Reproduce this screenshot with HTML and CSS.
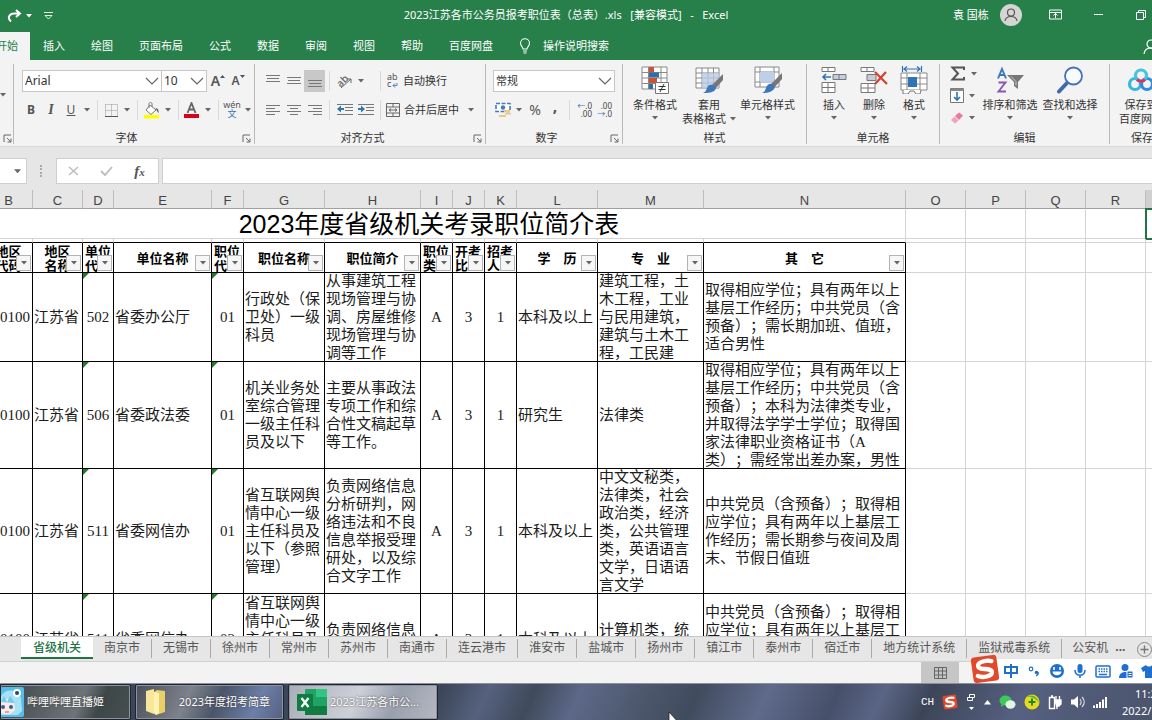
FILE: index.html
```html
<!DOCTYPE html>
<html lang="zh-CN">
<head>
<meta charset="utf-8">
<title>2023江苏各市公务员报考职位表（总表）.xls - Excel</title>
<link rel="stylesheet" href="styles.css">
</head>
<body>
<svg class="defs" aria-hidden="true">
  <symbol id="dn" viewBox="0 0 6 4"><path d="M0 0h6L3 3.5z" fill="currentColor"/></symbol>
  <symbol id="chev" viewBox="0 0 14 9"><path d="M1 1l6 6 6-6" fill="none" stroke="#666" stroke-width="1.2"/></symbol>
  <symbol id="launch" viewBox="0 0 9 9"><path d="M1 8V1h7M4 4l4 4M8 4.500V8H4.500" fill="none" stroke="#666"/></symbol>
  <symbol id="sogou" viewBox="0 0 28 28"><g transform="rotate(-8 14 14)"><rect x="2" y="2" width="24" height="24" rx="3" fill="#e2492b"/><path d="M21 7.500C17 6 8 6 8 10.500s12 2.500 12 7S10 22 6.500 19.500" fill="none" stroke="#fff" stroke-width="4" stroke-linecap="round"/></g></symbol>
</svg>

<header class="titlebar">
  <div class="quick">
    <button class="qa" aria-label="恢复"><svg width="16" height="14" viewBox="0 0 16 14"><path d="M4 12.500C-.5 8.500 3 4.500 7 4.500h5M9 1l4 3.500L9 8" fill="none" stroke="#fff" stroke-width="2"/></svg><svg class="dn"><use href="#dn"/></svg></button>
    <button class="qa" aria-label="自定义快速访问工具栏"><svg width="9" height="8" viewBox="0 0 9 8"><path d="M0 .5h9M1 3.500h7L4.500 7z" fill="none" stroke="#dff0e5"/></svg></button>
  </div>
  <h1 class="doc">2023江苏各市公务员报考职位表（总表）.xls&nbsp;&nbsp; [兼容模式]&nbsp;&nbsp; -&nbsp;&nbsp; Excel</h1>
  <div class="account">
    <span>袁 国栋</span>
    <svg class="avatar" viewBox="0 0 22 22"><circle cx="11" cy="11" r="11" fill="#d5d5d3"/><circle cx="11" cy="8.500" r="3.500" fill="none" stroke="#555" stroke-width="1.200"/><path d="M5 17c1-6 11-6 12 0" fill="none" stroke="#555" stroke-width="1.200"/></svg>
    <button class="win" aria-label="功能区显示选项"><svg width="13" height="11" viewBox="0 0 13 11"><path d="M.5 1h12v9H.5zM.5 3.500h12M6.500 9V4.500M4.500 6.500l2-2 2 2" fill="none" stroke="#fff"/></svg></button>
    <button class="win" aria-label="最小化"><svg width="9" height="9" viewBox="0 0 9 9"><path d="M0 4.500h9" stroke="#fff"/></svg></button>
    <button class="win" aria-label="还原"><svg width="10" height="10" viewBox="0 0 10 10"><path d="M.5 2.500h7v7h-7zM2.500 2.500v-2h7v7h-2" fill="none" stroke="#fff"/></svg></button>
  </div>
</header>

<nav class="menu">
  <button class="on">开始</button><button>插入</button><button>绘图</button><button>页面布局</button><button>公式</button><button>数据</button><button>审阅</button><button>视图</button><button>帮助</button><button>百度网盘</button>
  <button class="tell"><svg width="12" height="16" viewBox="0 0 12 16"><path d="M4 11C4 9 1.500 8 1.500 5.200a4.500 4.500 0 0 1 9 0C10.500 8 8 9 8 11zM4 13h4M4.500 15h3" fill="none" stroke="#fff" stroke-width="1.100"/></svg>操作说明搜索</button>
  <button class="share" aria-label="共享"><svg width="14" height="16" viewBox="0 0 14 16"><circle cx="8" cy="5" r="4" fill="none" stroke="#fff" stroke-width="1.200"/><path d="M1 15c1-7 8-7 10-4" fill="none" stroke="#fff" stroke-width="1.200"/></svg></button>
</nav>

<section class="ribbon" aria-label="功能区">
  <div class="group clip">
    <div class="body"><button class="arr edge" aria-label="粘贴选项"><svg class="dn"><use href="#dn"/></svg></button></div>
    <div class="cap"><span></span><button class="la" aria-label="剪贴板"><svg><use href="#launch"/></svg></button></div>
  </div>

  <div class="group font">
    <div class="body">
      <div class="line boxes">
        <label class="pick family"><select aria-label="字体"><option>Arial</option></select><svg><use href="#chev"/></svg></label>
        <label class="pick size"><select aria-label="字号"><option>10</option></select><svg><use href="#chev"/></svg></label>
        <button class="b grow" aria-label="增大字号"><b class="big">A</b><svg width="5" height="3"><path d="M0 3h5L2.500 0z" fill="#44546a"/></svg></button>
        <button class="b grow" aria-label="减小字号"><b>A</b><svg width="5" height="3"><path d="M0 0h5L2.500 3z" fill="#44546a"/></svg></button>
      </div>
      <div class="line">
        <button class="b"><b>B</b></button><button class="b it"><i>I</i></button><button class="b"><u>U</u></button><button class="arr" aria-label="下划线"><svg class="dn"><use href="#dn"/></svg></button><i class="sep"></i>
        <button class="b" aria-label="边框"><svg width="13" height="13" viewBox="0 0 13 13"><path d="M.5.5h12v12M.5.5v12M6.500.5v12M.5 6.500h12" fill="none" stroke="#999" stroke-dasharray="1 1"/><path d="M0 12.500h13" stroke="#555"/></svg></button><button class="arr" aria-label="边框选项"><svg class="dn"><use href="#dn"/></svg></button><i class="sep"></i>
        <button class="b" aria-label="填充颜色"><svg width="16" height="17" viewBox="0 0 16 17"><path d="M6 3l6 5-5 4.500L2 8zM5 6V2c0-2 3-2 3 0v3" fill="#fff" stroke="#777"/><path d="M12 6c3 1 2.500 3 2.500 5-2-1-1-3-3-4z" fill="#666"/><path d="M0 13h15v3.500H0z" fill="#ff0"/></svg></button><button class="arr" aria-label="填充选项"><svg class="dn"><use href="#dn"/></svg></button><i class="sep"></i>
        <button class="b" aria-label="字体颜色"><svg width="15" height="16" viewBox="0 0 15 16"><path d="M3.500 11L7.500 1l4 10M5 7.500h5" fill="none" stroke="#666" stroke-width="1.800"/><path d="M0 12h15v4H0z" fill="#d9001b"/></svg></button><button class="arr" aria-label="颜色选项"><svg class="dn"><use href="#dn"/></svg></button><i class="sep"></i>
        <button class="b wen"><span>wén</span><em>文</em></button><button class="arr" aria-label="拼音选项"><svg class="dn"><use href="#dn"/></svg></button>
      </div>
    </div>
    <div class="cap"><span>字体</span><button class="la" aria-label="字体设置"><svg><use href="#launch"/></svg></button></div>
  </div>

  <div class="group align">
    <div class="body">
      <div class="line">
        <button class="b" aria-label="顶端对齐"><svg width="14" height="14" viewBox="0 0 14 14"><path d="M0 1.500h14M1 4.500h12M0 7.500h14" stroke="#777"/></svg></button>
        <button class="b" aria-label="垂直居中"><svg width="14" height="14" viewBox="0 0 14 14"><path d="M0 3.500h14M1 6.500h12M0 9.500h14" stroke="#777"/></svg></button>
        <button class="b sel" aria-label="底端对齐"><svg width="14" height="14" viewBox="0 0 14 14"><path d="M0 6.500h14M1 9.500h12M0 12.500h14" stroke="#777"/></svg></button><i class="sep"></i>
        <div class="duo"><button class="b" aria-label="方向"><svg width="16" height="15" viewBox="0 0 16 15"><text x="0" y="11" font-size="10" font-family="Open Sans" font-weight="600" fill="#666" transform="rotate(-45 5 8)">ab</text><path d="M4 14L14 5M10 5h4v4" fill="none" stroke="#666"/></svg></button><button class="arr" aria-label="方向选项"><svg class="dn"><use href="#dn"/></svg></button></div><i class="sep"></i>
        <button class="txt"><svg width="13" height="16" viewBox="0 0 13 16"><text x="1" y="7" font-size="9" font-family="Open Sans" fill="#444">ab</text><text x="1" y="14" font-size="9" font-family="Open Sans" fill="#444">c</text><path d="M7 12.500h4V10M9 10.500l-2 2 2 2" fill="none" stroke="#4a86c5"/></svg>自动换行</button>
      </div>
      <div class="line">
        <button class="b" aria-label="左对齐"><svg width="14" height="11" viewBox="0 0 14 11"><path d="M0 .5h14M0 3.500h9M0 6.500h14M0 9.500h9" stroke="#777"/></svg></button>
        <button class="b" aria-label="居中"><svg width="14" height="11" viewBox="0 0 14 11"><path d="M0 .5h14M3 3.500h8M0 6.500h14M3 9.500h8" stroke="#777"/></svg></button>
        <button class="b" aria-label="右对齐"><svg width="14" height="11" viewBox="0 0 14 11"><path d="M0 .5h14M5 3.500h9M0 6.500h14M5 9.500h9" stroke="#777"/></svg></button><i class="sep"></i>
        <div class="duo"><button class="b" aria-label="减少缩进"><svg width="16" height="12" viewBox="0 0 16 12"><path d="M0 .5h16M8 3.500h8M8 6.500h8M0 10.500h16" stroke="#777"/><path d="M0 5l4-3.500v2.500h3v2H4v2.500z" fill="#2f75b5"/></svg></button><button class="b" aria-label="增加缩进"><svg width="16" height="12" viewBox="0 0 16 12"><path d="M0 .5h16M8 3.500h8M8 6.500h8M0 10.500h16" stroke="#777"/><path d="M7 5L3 1.500v2.500H0v2h3v2.500z" fill="#2f75b5"/></svg></button></div><i class="sep"></i>
        <button class="txt"><svg width="14" height="14" viewBox="0 0 14 14"><path d="M.5.5h13v13H.5zM.5 4h13M.5 10h13M7 .5V4M7 10v3.500M3 7h8M5 5.500L3 7l2 1.500M9 5.500L11 7 9 8.500" fill="none" stroke="#666"/></svg>合并后居中</button><button class="arr mrg" aria-label="合并选项"><svg class="dn"><use href="#dn"/></svg></button>
      </div>
    </div>
    <div class="cap"><span>对齐方式</span><button class="la" aria-label="对齐设置"><svg><use href="#launch"/></svg></button></div>
  </div>

  <div class="group num">
    <div class="body">
      <div class="line"><label class="pick fmt"><select aria-label="数字格式"><option>常规</option></select><svg><use href="#chev"/></svg></label></div>
      <div class="line">
        <button class="b" aria-label="会计数字格式"><svg width="17" height="16" viewBox="0 0 17 16"><rect x="1" y="1.500" width="14" height="8" fill="#fff" stroke="#4a7ab5" stroke-width="1.600" stroke-dasharray="4 1.500"/><circle cx="8" cy="5.500" r="2.200" fill="#4a7ab5"/><path d="M9 8h6v2H9zM10 11h6v1.500h-6zM4 13h7v2H4z" fill="#ecc97c"/></svg></button><button class="arr" aria-label="货币选项"><svg class="dn"><use href="#dn"/></svg></button>
        <button class="b pct">%</button><button class="b comma">,</button><i class="sep"></i>
        <button class="b dec" aria-label="增加小数位数"><span><em>←</em>.0</span><span>.00</span></button><button class="b dec" aria-label="减少小数位数"><span>.00</span><span><em>→</em>.0</span></button>
      </div>
    </div>
    <div class="cap"><span>数字</span><button class="la" aria-label="数字设置"><svg><use href="#launch"/></svg></button></div>
  </div>

  <div class="group styles">
    <div class="body row">
      <button class="lg"><svg width="28" height="28" viewBox="0 0 28 28"><path d="M1 1h25v22H1zM1 6.500h25M1 12h25M1 17.500h25M7.500 1v22M20 1v22" fill="#fff" stroke="#888"/><path d="M8 1h5v5H8zM8 12h8v5H8z" fill="#d0502f"/><path d="M8 6.500h10v5H8zM8 18h4v5H8z" fill="#2f6fa8"/><path d="M14.500 16.500h13v11h-13z" fill="#fff" stroke="#777"/><path d="M17.500 20.500h7M17.500 23.500h7M23 18l-4 8" stroke="#333"/></svg><span>条件格式</span><svg class="dn"><use href="#dn"/></svg></button>
      <button class="lg two"><svg width="28" height="28" viewBox="0 0 28 28"><path d="M1 2h23v20H1zM1 7h23M1 12h23M1 17h23M7 2v20M13 2v20M18.500 2v20" fill="#fff" stroke="#888"/><path d="M7 7h17v15H7z" fill="#b9cbe6" opacity=".8"/><path d="M28 8v6l-8 9-4-3z" fill="#777"/><path d="M18 19c3 1 4 4 1 6-3 2-8 2-11 2 3-1 3-3 4-5 1-3 3-4 6-3z" fill="#3e78b8"/></svg><span>套用</span><span>表格格式<svg class="dn"><use href="#dn"/></svg></span></button>
      <button class="lg"><svg width="28" height="28" viewBox="0 0 28 28"><path d="M1 1h24v20H1zM1 6h24M1 16h24M6 1v20M20 1v20" fill="#fff" stroke="#888"/><path d="M6 6h14v10H6z" fill="#bcd0ec"/><path d="M28 7v6l-8 9-4-3z" fill="#777"/><path d="M18 18c3 1 4 4 1 6-3 3-8 3-11 3 3-1 3-3 4-5 1-3 3-5 6-4z" fill="#3e78b8"/></svg><span>单元格样式</span><svg class="dn"><use href="#dn"/></svg></button>
    </div>
    <div class="cap"><span>样式</span></div>
  </div>

  <div class="group cellsg">
    <div class="body row">
      <button class="lg"><svg width="28" height="28" viewBox="0 0 28 28"><path d="M2 1.500h13v4H2zM8 1.500v4M2 16.500h13v10H2zM2 21.500h13M8 16.500v10" fill="#fff" stroke="#777"/><path d="M13 8.500h13v5H13zM19 8.500v5" fill="#c2cfe3" stroke="#777"/><path d="M3 11h8M6 8l-3 3 3 3" fill="none" stroke="#2f75b5" stroke-width="1.600"/></svg><span>插入</span><svg class="dn"><use href="#dn"/></svg></button>
      <button class="lg"><svg width="28" height="28" viewBox="0 0 28 28"><path d="M1 1.500h13v4H1zM7 1.500v4M1 17.500h14v9H1zM1 22h14M8 17.500v9" fill="#fff" stroke="#777"/><path d="M7 8.500h9v6H7z" fill="#c8ccd2" stroke="#777"/><path d="M15 6l12 12M26 6L15 18" stroke="#d2412c" stroke-width="2.200"/></svg><span>删除</span><svg class="dn"><use href="#dn"/></svg></button>
      <button class="lg"><svg width="28" height="28" viewBox="0 0 28 28"><path d="M1 7h26v17H1zM1 12h26M1 18h26M7 7v17M20 7v17" fill="#fff" stroke="#888"/><path d="M3 24v4h5l2-3h4l2 3h4l1-4" fill="#fff" stroke="#777"/><path d="M8 11h9v10H8z" fill="#2f75b5"/><path d="M2.500 0v6M21.500 0v6M4 3h16M7 .5L4 3l3 2.500M17 .5L20 3l-3 2.500" fill="none" stroke="#2f75b5" stroke-width="1.200"/></svg><span>格式</span><svg class="dn"><use href="#dn"/></svg></button>
    </div>
    <div class="cap"><span>单元格</span></div>
  </div>

  <div class="group edit">
    <div class="body row">
      <div class="stack">
        <button aria-label="自动求和"><svg width="16" height="15" viewBox="0 0 16 15"><path d="M14 4V1.500H2.500L8 7.500l-5.500 6H14V11" fill="none" stroke="#555" stroke-width="2"/></svg><svg class="dn"><use href="#dn"/></svg></button>
        <button aria-label="填充"><svg width="14" height="15" viewBox="0 0 14 15"><path d="M.5.5h13v14H.5z" fill="#fff" stroke="#777"/><path d="M.5.5h13V3H.5z" fill="#888"/><path d="M7 4v8M4 9l3 3 3-3" fill="none" stroke="#2f75b5" stroke-width="1.600"/></svg><svg class="dn"><use href="#dn"/></svg></button>
        <button aria-label="清除"><svg width="14" height="12" viewBox="0 0 14 12"><path d="M5 4l4-3.500 4 3L9 8z" fill="#e8799c"/><path d="M4.500 4.500l4 4L5 11.500 1 8z" fill="#f0a3bb"/></svg><svg class="dn"><use href="#dn"/></svg></button>
      </div>
      <button class="lg"><svg width="28" height="28" viewBox="0 0 28 28"><path d="M2 12.500L6 3l4 9.500M3.500 9h5" fill="none" stroke="#3b78b9" stroke-width="1.900"/><path d="M2.500 16.500h7l-7 9h7.500" fill="none" stroke="#8c55b0" stroke-width="1.900"/><path d="M11 9h17l-6 7v7l-4-3v-4z" fill="#777"/><path d="M15 10.500l5 5v4" fill="none" stroke="#ccc"/></svg><span>排序和筛选</span><svg class="dn"><use href="#dn"/></svg></button>
      <button class="lg"><svg width="28" height="28" viewBox="0 0 28 28"><path d="M11 17L3 25.500" stroke="#4069a8" stroke-width="4" stroke-linecap="round"/><circle cx="17.500" cy="10" r="8.500" fill="#f7fbff" stroke="#4473b4" stroke-width="1.800"/></svg><span>查找和选择</span><svg class="dn"><use href="#dn"/></svg></button>
    </div>
    <div class="cap"><span>编辑</span></div>
  </div>

  <div class="group save">
    <div class="body row">
      <button class="lg"><svg width="28" height="28" viewBox="0 0 28 28"><circle cx="8" cy="18" r="5.500" fill="none" stroke="#35b8e0" stroke-width="3.200"/><circle cx="20" cy="18" r="5.500" fill="none" stroke="#2f8be0" stroke-width="3.200"/><circle cx="14" cy="9.500" r="5.500" fill="none" stroke="#46c3dd" stroke-width="3.200"/><path d="M10 13.500a5.500 5.500 0 0 0 8 0" fill="none" stroke="#e0335a" stroke-width="3.200"/></svg><span>保存到</span><span>百度网盘</span></button>
    </div>
    <div class="cap"><span>保存</span></div>
  </div>
</section>

<section class="formula">
  <div class="name"><input aria-label="名称框"><svg class="dn"><use href="#dn"/></svg></div>
  <i class="dots"></i>
  <div class="fx">
    <button aria-label="取消"><svg width="11" height="10" viewBox="0 0 11 10"><path d="M1 1l9 8M10 1L1 9" stroke="#bbb" stroke-width="1.400"/></svg></button>
    <button aria-label="输入"><svg width="13" height="10" viewBox="0 0 13 10"><path d="M1 5l4 4 7-8" fill="none" stroke="#bbb" stroke-width="1.800"/></svg></button>
    <button class="fn" aria-label="插入函数"><i>f<small>x</small></i></button>
  </div>
  <input class="bar" aria-label="编辑栏">
</section>

<main class="sheet">
<table>
  <colgroup><col class="w32"><col class="w48"><col class="w50"><col class="w31"><col class="w98"><col class="w32"><col class="w81"><col class="w96"><col class="w32"><col class="w32"><col class="w32"><col class="w81"><col class="w106"><col class="w202"><col class="w60"><col class="w60"><col class="w60"><col class="w60"><col class="w60"></colgroup>
  <thead>
    <tr class="letters"><th></th><th>B</th><th>C</th><th>D</th><th>E</th><th>F</th><th>G</th><th>H</th><th>I</th><th>J</th><th>K</th><th>L</th><th>M</th><th>N</th><th>O</th><th>P</th><th>Q</th><th>R</th><th class="cur"></th></tr>
  </thead>
  <tbody>
    <tr class="title"><td colspan="14">2023年度省级机关考录职位简介表</td><td></td><td></td><td></td><td></td><td class="active"></td></tr>
    <tr class="thin"><td></td><td></td><td></td><td></td><td></td><td></td><td></td><td></td><td></td><td></td><td></td><td></td><td></td><td></td><td></td><td></td><td></td><td></td><td></td></tr>
    <tr class="heads">
      <th></th>
      <th>地区<br>代码<button class="flt" aria-label="筛选"><svg class="dn"><use href="#dn"/></svg></button></th>
      <th>地区<br>名称<button class="flt" aria-label="筛选"><svg class="dn"><use href="#dn"/></svg></button></th>
      <th class="lf">单位<br>代<button class="flt" aria-label="筛选"><svg class="dn"><use href="#dn"/></svg></button></th>
      <th>单位名称<button class="flt" aria-label="筛选"><svg class="dn"><use href="#dn"/></svg></button></th>
      <th class="lf">职位<br>代<button class="flt" aria-label="筛选"><svg class="dn"><use href="#dn"/></svg></button></th>
      <th>职位名称<button class="flt" aria-label="筛选"><svg class="dn"><use href="#dn"/></svg></button></th>
      <th>职位简介<button class="flt" aria-label="筛选"><svg class="dn"><use href="#dn"/></svg></button></th>
      <th class="lf">职位<br>类<button class="flt" aria-label="筛选"><svg class="dn"><use href="#dn"/></svg></button></th>
      <th class="lf">开考<br>比<button class="flt" aria-label="筛选"><svg class="dn"><use href="#dn"/></svg></button></th>
      <th class="lf">招考<br>人<button class="flt" aria-label="筛选"><svg class="dn"><use href="#dn"/></svg></button></th>
      <th>学　历<button class="flt" aria-label="筛选"><svg class="dn"><use href="#dn"/></svg></button></th>
      <th>专　业<button class="flt" aria-label="筛选"><svg class="dn"><use href="#dn"/></svg></button></th>
      <th>其　它<button class="flt" aria-label="筛选"><svg class="dn"><use href="#dn"/></svg></button></th>
      <td></td><td></td><td></td><td></td><td></td>
    </tr>
    <tr class="r1">
      <td></td><td class="rt"><div>0100</div></td><td><div>江苏省</div></td><td class="ct err"><div>502</div></td><td><div>省委办公厅</div></td><td class="ct err"><div>01</div></td>
      <td><div>行政处（保<br>卫处）一级<br>科员</div></td>
      <td><div>从事建筑工程<br>现场管理与协<br>调、房屋维修<br>现场管理与协<br>调等工作</div></td>
      <td class="ct"><div>A</div></td><td class="ct"><div>3</div></td><td class="ct"><div>1</div></td><td><div>本科及以上</div></td>
      <td><div>建筑工程，土<br>木工程，工业<br>与民用建筑，<br>建筑与土木工<br>程，工民建</div></td>
      <td><div>取得相应学位；具有两年以上<br>基层工作经历；中共党员（含<br>预备）；需长期加班、值班，<br>适合男性</div></td>
      <td></td><td></td><td></td><td></td><td></td>
    </tr>
    <tr class="r2">
      <td></td><td class="rt"><div>0100</div></td><td><div>江苏省</div></td><td class="ct err"><div>506</div></td><td><div>省委政法委</div></td><td class="ct err"><div>01</div></td>
      <td><div>机关业务处<br>室综合管理<br>一级主任科<br>员及以下</div></td>
      <td><div>主要从事政法<br>专项工作和综<br>合性文稿起草<br>等工作。</div></td>
      <td class="ct"><div>A</div></td><td class="ct"><div>3</div></td><td class="ct"><div>1</div></td><td><div>研究生</div></td>
      <td><div>法律类</div></td>
      <td><div>取得相应学位；具有两年以上<br>基层工作经历；中共党员（含<br>预备）；本科为法律类专业，<br>并取得法学学士学位；取得国<br>家法律职业资格证书（A<br>类）；需经常出差办案，男性</div></td>
      <td></td><td></td><td></td><td></td><td></td>
    </tr>
    <tr class="r3">
      <td></td><td class="rt"><div>0100</div></td><td><div>江苏省</div></td><td class="ct err"><div>511</div></td><td><div>省委网信办</div></td><td class="ct err"><div>01</div></td>
      <td><div>省互联网舆<br>情中心一级<br>主任科员及<br>以下（参照<br>管理）</div></td>
      <td><div>负责网络信息<br>分析研判，网<br>络违法和不良<br>信息举报受理<br>研处，以及综<br>合文字工作</div></td>
      <td class="ct"><div>A</div></td><td class="ct"><div>3</div></td><td class="ct"><div>1</div></td><td><div>本科及以上</div></td>
      <td><div>中文文秘类，<br>法律类，社会<br>政治类，经济<br>类，公共管理<br>类，英语语言<br>文学，日语语<br>言文学</div></td>
      <td><div>中共党员（含预备）；取得相<br>应学位；具有两年以上基层工<br>作经历；需长期参与夜间及周<br>末、节假日值班</div></td>
      <td></td><td></td><td></td><td></td><td></td>
    </tr>
    <tr class="r4">
      <td></td><td class="rt"><div>0100</div></td><td><div>江苏省</div></td><td class="ct err"><div>511</div></td><td><div>省委网信办</div></td><td class="ct err"><div>02</div></td>
      <td><div>省互联网舆<br>情中心一级<br>主任科员及<br><br><br></div></td>
      <td><div>负责网络信息<br><br></div></td>
      <td class="ct"><div>A</div></td><td class="ct"><div>3</div></td><td class="ct"><div>1</div></td><td><div>本科及以上</div></td>
      <td><div>计算机类，统<br><br></div></td>
      <td><div>中共党员（含预备）；取得相<br>应学位；具有两年以上基层工<br><br><br></div></td>
      <td></td><td></td><td></td><td></td><td></td>
    </tr>
  </tbody>
</table>
</main>

<nav class="tabs">
  <button class="on">省级机关</button><button>南京市</button><button>无锡市</button><button>徐州市</button><button>常州市</button><button>苏州市</button><button>南通市</button><button>连云港市</button><button>淮安市</button><button>盐城市</button><button>扬州市</button><button>镇江市</button><button>泰州市</button><button>宿迁市</button><button>地方统计系统</button><button>监狱戒毒系统</button><button class="cut">公安机</button><span class="more">...</span>
  <button class="add" aria-label="新工作表"><svg width="15" height="15" viewBox="0 0 15 15"><circle cx="7.500" cy="7.500" r="7" fill="none" stroke="#888"/><path d="M7.500 3.500v8M3.500 7.500h8" stroke="#777" stroke-width="1.400"/></svg></button>
</nav>

<footer class="status">
  <button class="view" aria-label="普通"><svg width="13" height="12" viewBox="0 0 13 12"><path d="M.5.5h12v11H.5zM.5 4h12M.5 8h12M4.500 0v12M8.500 0v12" fill="none" stroke="#666"/></svg></button>
  <div class="ime">
    <svg class="logo"><use href="#sogou"/></svg>
    <svg viewBox="0 0 16 16"><path d="M2 4h12v6H2zM8 1v14" fill="none" stroke="#1e6fd0" stroke-width="2"/></svg>
    <svg viewBox="0 0 16 16"><circle cx="5" cy="6" r="1.800" fill="none" stroke="#1e6fd0" stroke-width="1.200"/><circle cx="10.500" cy="9.500" r="1.800" fill="#1e6fd0"/><path d="M12 9c.5 2-.5 3.500-2 4" fill="none" stroke="#1e6fd0" stroke-width="1.300"/></svg>
    <svg viewBox="0 0 16 16"><circle cx="8" cy="8" r="7" fill="#1e6fd0"/><path d="M5 4v3M11 4v3" stroke="#fff" stroke-width="1.600"/><path d="M3.500 8.500h9c0 5-9 5-9 0z" fill="#fff"/></svg>
    <svg viewBox="0 0 16 16"><rect x="5.500" y="1" width="5" height="9" rx="2.500" fill="#1e6fd0"/><path d="M3 7c0 7 10 7 10 0M8 12v3" fill="none" stroke="#1e6fd0" stroke-width="1.600"/></svg>
    <svg viewBox="0 0 16 16"><rect x="1" y="3" width="14" height="11" rx="1" fill="none" stroke="#1e6fd0" stroke-width="1.500"/><path d="M3.500 6h9M3.500 8.500h9" stroke="#1e6fd0" stroke-width="1.500" stroke-dasharray="1.500 1"/><path d="M4 11.500h8" stroke="#1e6fd0" stroke-width="1.500"/></svg>
    <svg viewBox="0 0 16 16"><circle cx="7" cy="4.500" r="3.500" fill="#1e6fd0"/><path d="M1 15c0-8 12-8 12 0z" fill="#1e6fd0"/><path d="M9 8h6v7H9z" fill="#1e6fd0" stroke="#fff"/><path d="M10.500 10.500h3M10.500 12.500h3" stroke="#fff"/></svg>
    <svg viewBox="0 0 16 16"><path d="M5 2c1 2 5 2 6 0l5 3-2 4-2-1v7H4V8L2 9 0 5z" fill="#1e6fd0"/></svg>
  </div>
</footer>

<footer class="taskbar">
  <button class="task t1"><svg width="23" height="30" viewBox="0 0 23 30"><rect width="23" height="30" rx="2" fill="#55bde8"/><path d="M0 9c5-8 16-7 20 2l1 13-4 4H0z" fill="#a5e2f6"/><path d="M0 15c4-4 10-4 13-1l1 9c-4 5-10 5-14 3z" fill="#fbe9e6"/><path d="M0 15l3-6 3 6 3-6 5 7" fill="#6ccbee"/><circle cx="2" cy="20" r="2" fill="#3a5b96"/><circle cx="10" cy="20" r="2" fill="#3a5b96"/><circle cx="16" cy="6" r="4" fill="#fff"/><circle cx="16" cy="6" r="2" fill="#345"/><path d="M4 25h4" stroke="#d55"/></svg><span>哔哩哔哩直播姬</span></button>
  <button class="task t2"><svg width="22" height="28" viewBox="0 0 22 28"><path d="M1 3l8-2v25l-8-3z" fill="#f6e79a"/><path d="M9 4l3-2 8 1v21l-9 3-2-2z" fill="#e8cf66"/><path d="M9 4l5 1v20l-3 2-2-2z" fill="#fdf3b5"/></svg><span>2023年度招考简章</span></button>
  <button class="task t3"><svg width="30" height="28" viewBox="0 0 30 28"><rect x="8" y="1" width="22" height="26" rx="1" fill="#21a366"/><path d="M19 1h11v8H19z" fill="#33c481"/><path d="M8 18h22v9H8z" fill="#107c41"/><rect y="6" width="16" height="17" rx="1" fill="#107c41"/><path d="M4.500 10l7 9M11.500 10l-7 9" stroke="#fff" stroke-width="2.200"/></svg><span>2023江苏各市公...</span></button>
  <div class="tray">
    <span class="ch">CH</span>
    <svg width="16" height="16"><use href="#sogou"/></svg>
    <svg width="10" height="18" viewBox="0 0 10 18"><path d="M1.500 4.500h5v3h-5zM3.500 4.500v-3h5v3h-2" fill="none" stroke="#fff"/><path d="M3 14h5l-2.500 3z" fill="#fff"/></svg>
    <svg width="7" height="5" viewBox="0 0 7 5"><path d="M0 4.500h7L3.500 0z" fill="#fff"/></svg>
    <svg width="17" height="15" viewBox="0 0 17 15"><ellipse cx="6.500" cy="5.500" rx="6" ry="5" fill="#3fc85a"/><ellipse cx="11.500" cy="9.500" rx="5" ry="4.200" fill="#e3f3e6"/><path d="M2.500 9l-.5 3 3-2z" fill="#3fc85a"/></svg>
    <svg width="16" height="16" viewBox="0 0 16 16"><circle cx="8" cy="8" r="7.500" fill="#e6dc1c"/><path d="M2 3c6-4 12 0 13 6-2-4-8-7-13-6z" fill="#57b53c"/><path d="M8 4.500v7M4.500 8h7" stroke="#25843a" stroke-width="2"/></svg>
    <svg width="14" height="15" viewBox="0 0 14 15"><path d="M1.500 2.500h5v11h-5zM3 1h2" fill="none" stroke="#fff" stroke-width="1.400"/><path d="M6 5h7v4l-2 2H9v3M8 1v4M11.500 1v4" fill="#fff" stroke="#fff" stroke-width="1.300"/></svg>
    <svg width="15" height="14" viewBox="0 0 15 14"><path d="M1 4.500h3L8 1v12L4 9.500H1z" fill="#fff"/><path d="M10 4c1.500 2 1.500 4 0 6M12 2c3 3 3 7 0 10" fill="none" stroke="#dde" stroke-width="1.100"/></svg>
    <svg width="14" height="12" viewBox="0 0 14 12"><path d="M1 12V9.500M4 12V8M7 12V6M10 12V3.500M13 12V1" stroke="#fff" stroke-width="2"/></svg>
    <div class="clock"><span>11:2</span><span>2022/</span></div>
  </div>
  <svg class="cursor" viewBox="0 0 12 18"><path d="M1 1v15l3.500-3.500L7 18l2-1-2.500-5H11z" fill="#fff" stroke="#222" stroke-width=".8"/></svg>
</footer>
</body>
</html>
```

FILE: styles.css
```css
* { box-sizing: border-box; }
html, body { height: 100%; }
body {
  margin: 0;
  display: flex;
  flex-direction: column;
  overflow: hidden;
  background: #e6e6e6;
  color: #333;
  font: 11px/16px "Noto Sans", "Noto Sans CJK SC", sans-serif;
  text-spacing-trim: space-all;
}
button, input, select { font: inherit; color: inherit; margin: 0; padding: 0; border: 0; background: none; border-radius: 0; }
button { display: inline-flex; align-items: center; justify-content: center; white-space: nowrap; flex: none; }
svg { flex: none; display: block; }
.defs { position: absolute; width: 0; height: 0; }
.dn { width: 6px; height: 4px; color: #666; }

/* title bar */
.titlebar { display: flex; align-items: center; height: 32px; flex: none; background: #27804a; color: #fff; }
.quick { width: 192px; flex: none; display: flex; gap: 12px; padding-left: 7px; }
.qa { gap: 3px; }
.qa .dn { color: #fff; }
.doc { flex: 1; margin: 0; padding-bottom: 3px; font: inherit; text-align: center; white-space: nowrap; }
.account { width: 212px; flex: none; display: flex; align-items: center; padding: 0 0 3px 13px; white-space: nowrap; }
.avatar { width: 22px; height: 22px; margin: 0 12px 0 11px; }
.win { width: 43px; }

/* menu */
.menu { display: flex; height: 28px; flex: none; background: #27804a; color: #fff; }
.menu button { padding: 0 13px 1px; }
.menu .on { background: #f3f3f3; color: #27804a; margin-left: -16px; padding: 0 12px 1px; }
.menu .tell { gap: 12px; }
.menu .share { margin-left: auto; padding: 2px 0 0; margin-right: -5px; }

/* ribbon */
.ribbon { display: flex; height: 87px; flex: none; background: #f3f3f3; border-bottom: 1px solid #dadada; overflow: hidden; padding: 4px 0 2px; }
.group { flex: none; border-right: 1px solid #b9b9b9; display: flex; flex-direction: column; justify-content: space-between; }
.clip { width: 14px; }
.font { width: 241px; }
.align { width: 231px; }
.num { width: 137px; }
.styles { width: 184px; }
.cellsg { width: 133px; }
.edit { width: 170px; }
.save { width: 64px; border-right: 0; }
.body { padding: 6px 0 0 7px; display: flex; flex-direction: column; gap: 7px; }
.clip .body { padding: 20px 0 0; align-items: flex-start; }
.body.row { flex-direction: row; padding-top: 2px; gap: 2px; }
.cap { display: flex; align-items: center; height: 12px; }
.cap span { flex: 1; text-align: center; white-space: nowrap; }
.la { width: 15px; }
.la svg { width: 9px; height: 9px; }
.line { display: flex; align-items: center; height: 22px; }
.b { width: 20px; height: 22px; font-size: 12px; color: #555; }
.align .b { width: 21px; }
.duo { display: flex; width: 42px; }
.arr { width: 12px; height: 22px; }
.clip .arr { width: 5px; }
.mrg { margin-left: 6px; }
.sep { width: 1px; height: 20px; margin: 0 4px; background: #d8d8d8; }
.it { font-family: "Liberation Serif", serif; font-weight: bold; font-size: 14px; }
.sel { background: #c8c8c8; }
.boxes { padding-left: 1px; }
.pick { position: relative; display: block; height: 22px; border: 1px solid #c6c6c6; background: #fff; }
.pick select { appearance: none; width: 100%; height: 20px; padding-left: 2px; font-size: 12px; }
.pick svg { position: absolute; right: 2px; top: 6px; width: 14px; height: 9px; pointer-events: none; }
.family { width: 140px; }
.size { width: 45px; border-left: 0; margin-right: 1px; }
.fmt { width: 122px; }
.fmt select { font-size: 11px; }
.grow { align-items: center; gap: 0; }
.grow svg { margin-bottom: 10px; }
.grow b { font-weight: 600; font-size: 12px; }
.grow .big { font-size: 14px; }
.txt { gap: 4px; padding-left: 1px; }
.wen { flex-direction: column; font-size: 9px; line-height: 8px; }
.wen em { font-style: normal; color: #2f75b5; line-height: 10px; }
.pct { font-size: 14px; }
.comma { font-size: 16px; font-weight: bold; padding-bottom: 8px; }
.dec { flex-direction: column; align-items: flex-end; font-size: 8px; line-height: 8px; padding-right: 2px; color: #444; }
.dec em { font-style: normal; color: #2f75b5; }
.lg { flex-direction: column; justify-content: flex-start; line-height: 14px; }
.styles .body { padding-left: 9px; }
.styles .lg { min-width: 46px; }
.lg > svg:first-child { margin-bottom: 4px; }
.lg > .dn { margin-top: 4px; }
.lg span { display: flex; align-items: center; gap: 4px; }
.styles .two { width: 58px; }
.cellsg .row { gap: 0; }
.cellsg .lg { width: 40px; }
.edit .body { padding-left: 10px; gap: 4px; }
.edit .lg { width: 56px; }
.stack { display: flex; flex-direction: column; align-items: flex-start; width: 28px; gap: 7px; }
.stack button { gap: 5px; height: 15px; }
.save .body { padding-left: 9px; }

/* formula bar */
.formula { display: flex; height: 43px; flex: none; padding: 11px 0 6px; background: #e6e6e6; }
.name, .fx, .bar { background: #fff; border: 1px solid #cfcfcf; height: 26px; }
.name { width: 27px; flex: none; display: flex; align-items: center; border-left: 0; }
.name input { width: 14px; }
.name .dn { width: 7px; height: 5px; }
.dots { width: 2px; height: 12px; margin: 7px 14px 0 13px; border-left: 2px dotted #aaa; }
.fx { width: 103px; flex: none; display: flex; }
.fx button { width: 33px; }
.fn i { font: italic bold 15px "Liberation Serif", serif; color: #555; }
.fn small { font-size: 11px; }
.bar { flex: 1; min-width: 0; margin-left: 3px; border-right: 0; }

/* sheet */
.sheet { flex: 1; min-height: 0; overflow: hidden; background: #fff; }
.sheet table { table-layout: fixed; width: 1253px; margin-left: -47px; border-collapse: separate; border-spacing: 0; font: 15px/18px "Liberation Serif", "Noto Sans CJK SC", serif; color: #1c1c1c; }
.w31 { width: 31px; } .w32 { width: 32px; } .w48 { width: 48px; } .w50 { width: 50px; } .w60 { width: 60px; }
.w81 { width: 81px; } .w96 { width: 96px; } .w98 { width: 98px; } .w106 { width: 106px; } .w202 { width: 202px; }
.sheet td, .sheet th { padding: 0; border-right: 1px solid #d4d4d4; border-bottom: 1px solid #d4d4d4; position: relative; white-space: nowrap; }
.sheet .letters th { height: 19px; padding-top: 3px; background: #e6e6e6; border-right-color: #bdbdbd; border-bottom-color: #a0a0a0; color: #444; font: 13px/15px "Liberation Sans", sans-serif; }
.sheet .letters .cur { background: #d0d0d0; }
.title td { height: 30px; }
.title td:first-child { font: 25px/28px "Liberation Sans", "Noto Sans CJK SC", sans-serif; text-align: center; color: #000; }
.title .active { outline: 2px solid #217346; outline-offset: -1px; }
.thin td { height: 4px; line-height: 0; }
.thin td:nth-child(-n+14), .heads th, .sheet tr td:has(> div) { border-bottom-color: #000; }
.heads th, .sheet tr td:has(> div) { border-right-color: #000; }
.heads th { height: 30px; font: bold 13px/14px "Noto Sans CJK SC", sans-serif; overflow: hidden; color: #000; }
.heads .lf { text-align: left; padding-left: 2px; }
.flt { position: absolute; right: 1px; bottom: 1px; width: 15px; height: 16px; background: #f6f6f6; border: 1px solid #b4b4b4; }
.sheet td > div { display: grid; align-content: center; overflow: hidden; padding-left: 1px; }
.r1 div { height: 88px; }
.r2 div { height: 106px; }
.r3 div { height: 124px; }
.r4 div { height: 90px; }
.sheet .ct > div { text-align: center; padding: 0; }
.sheet .rt > div { text-align: right; padding-right: 2px; }
.err::before { content: ""; position: absolute; left: 0; top: 0; border-top: 6px solid #1c7d2c; border-right: 6px solid transparent; }

/* sheet tabs */
.tabs { display: flex; height: 26px; flex: none; padding-left: 21px; background: #e6e6e6; border-top: 1px solid #c4c4c4; border-bottom: 1px solid #cfcfcf; font-size: 12px; color: #555; }
.tabs button { height: 22px; padding: 0 11px; }
.tabs button:not(.on):not(.cut):not(.add) { background: linear-gradient(#aaa, #aaa) right center / 1px 19px no-repeat; padding-right: 12px; }
.tabs .on { background: #fff; color: #217346; border-bottom: 2px solid #217346; font-weight: 500; padding: 1px 12px 0; }
.tabs .cut { padding: 0 7px 0 10px; }
.more { width: 23px; font-weight: bold; line-height: 20px; }
.tabs .add { padding: 2px 0 0; }

/* status bar */
.status { position: relative; height: 21px; flex: none; background: #f3f3f3; display: flex; }
.view { width: 38px; margin-left: auto; margin-right: 193px; background: #c6c6c6; }
.ime { position: absolute; right: -5px; bottom: 0; height: 24px; display: flex; align-items: center; gap: 7px; background: #fff; }
.ime svg { width: 16px; height: 16px; }
.ime .logo { width: 30px; height: 30px; margin: -4px -4px 0 -3px; }

/* taskbar */
.taskbar { position: relative; display: flex; height: 37px; flex: none; color: #fff; border-top: 1px solid #8b909c; background: linear-gradient(115deg, #3b4658 0 38%, #56617f 42%, #3f4a5c 46%, #5d6888 50%, #4b566b 56%, #414b5e 60%, #5f6a8b 66%, #46506a 72%, #5a6585 76%, #3c4558 80%, #566080 88%, #4a546c); overflow: hidden; }
.task { justify-content: flex-start; height: 36px; border: 1px solid #20242c; border-radius: 2px; box-shadow: inset 0 0 0 1px #8b93a1; margin-right: 4px; }
.t1 { width: 131px; gap: 3px; background: linear-gradient(115deg, #3c4446, #6d7478 60%, #3d4748 75%, #47504f); }
.t2 { width: 149px; padding-left: 9px; background: linear-gradient(115deg, #4a5058, #7d828c 35%, #4a5568 55%, #6c7fa8 80%, #55617f); }
.t3 { width: 150px; padding-left: 8px; gap: 3px; background: linear-gradient(115deg, #a9aeb8, #cdd0d8 45%, #9a9fad 70%, #b5b8c2); }
.task span { text-shadow: 0 0 2px #333; }
.t2 span { margin-left: auto; padding-right: 13px; }
.tray { margin-left: auto; width: 231px; flex: none; display: flex; align-items: center; gap: 8px; overflow: hidden; white-space: nowrap; }
.ch { font: 11px/14px "Liberation Mono", monospace; width: 13px; }
.clock { display: flex; flex-direction: column; line-height: 17px; padding-left: 7px; }
.clock span:first-child { padding-left: 13px; }
.cursor { position: absolute; left: 668px; top: 27px; width: 12px; height: 18px; }
```
